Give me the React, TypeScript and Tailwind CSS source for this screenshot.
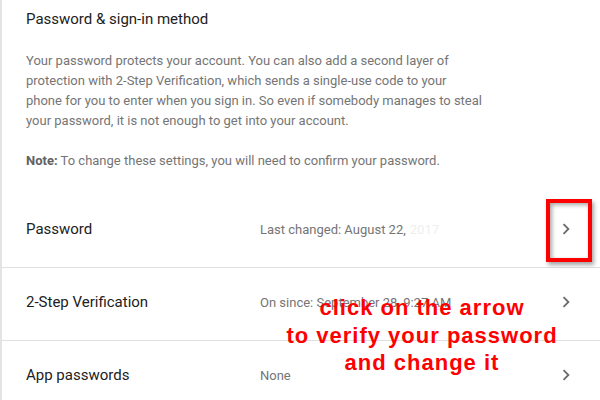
import React from "react";

const rows = [
  { label: "Password", value: "Last changed: August 22,", faded: "2017" },
  { label: "2-Step Verification", value: "On since: September 28, 9:27 AM" },
  { label: "App passwords", value: "None" },
];

function Chevron() {
  return (
    <svg width="22" height="22" viewBox="0 0 24 24" className="shrink-0">
      <path d="M10 6L8.59 7.41 13.17 12l-4.58 4.59L10 18l6-6z" fill="#6b6b6b" />
    </svg>
  );
}

export default function App() {
  return (
    <div
      className="relative h-[400px] w-[600px] overflow-hidden bg-white"
      style={{ fontFamily: "Roboto, 'Liberation Sans', sans-serif" }}
    >
      <div className="h-full border-l-2 border-[#e3e3e3]">
        <div className="px-6 pt-[9px]">
          <h2 className="text-[15px] leading-5 text-[#212121]">Password &amp; sign-in method</h2>
          <p className="mt-[22px] text-[13px] leading-5 text-[#757575]">
            Your password protects your account. You can also add a second layer of
            <br />
            protection with 2-Step Verification, which sends a single-use code to your
            <br />
            phone for you to enter when you sign in. So even if somebody manages to steal
            <br />
            your password, it is not enough to get into your account.
          </p>
          <p className="mt-5 text-[13px] leading-5 text-[#757575]">
            <span className="font-bold text-[#616161]">Note:</span> To change these settings, you will need to confirm your password.
          </p>
        </div>

        <div className="mt-6">
          {rows.map((row) => (
            <div key={row.label} className="flex h-[73px] items-start border-b border-[#e0e0e0] pl-6 pr-[23px] pt-6">
              <div className="w-[234px] text-[15px] leading-5 text-[#212121]">{row.label}</div>
              <div className="flex-1 pt-[1px] text-[13px] leading-5 text-[#757575]">
                {row.value}
                {row.faded && <span className="ml-1 text-[#eeeeee]">{row.faded}</span>}
              </div>
              <div className="-mt-[1px]">
                <Chevron />
              </div>
            </div>
          ))}
        </div>
      </div>

      <div className="absolute left-[546px] top-[199px] h-[63px] w-[46px] border-4 border-[#ff0000] shadow-[2px_3px_4px_rgba(0,0,0,0.35),inset_2px_2px_4px_rgba(0,0,0,0.35)]" />

      <div
        className="absolute left-[281px] top-[294px] w-[282px] text-center text-[22px] font-bold leading-[27.5px] tracking-[1px] text-[#ff0000]"
        style={{ fontFamily: "'Liberation Sans', Arial, sans-serif" }}
      >
        click on the arrow
        <br />
        to verify your password
        <br />
        and change it
      </div>
    </div>
  );
}
